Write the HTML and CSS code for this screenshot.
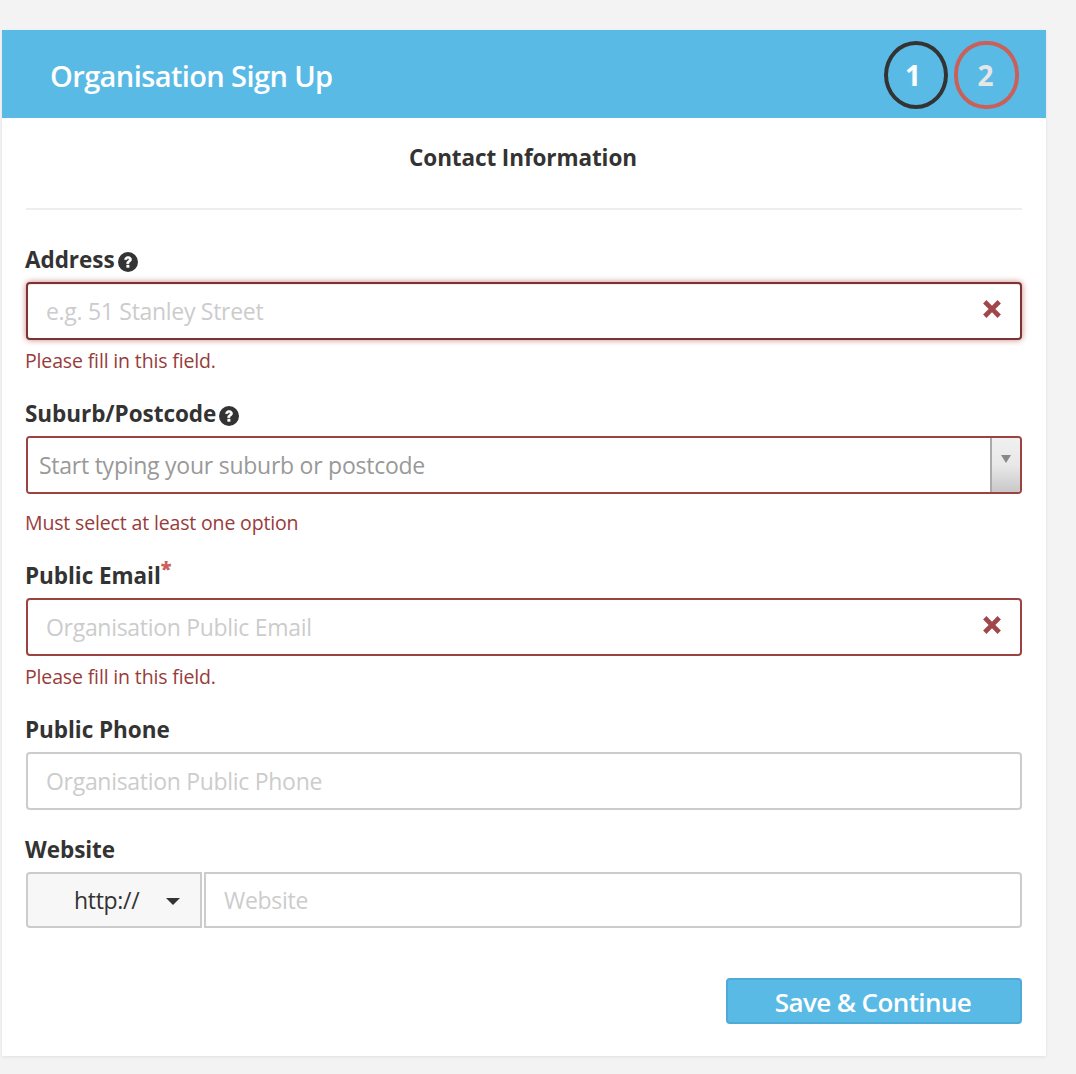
FILE: index.html
```html
<!DOCTYPE html>
<html lang="en">
<head>
    <meta charset="UTF-8">
    <meta name="viewport" content="width=device-width, initial-scale=1.0">
    <title>Organisation Sign Up</title>
    <link rel="stylesheet" href="styles.css">
</head>
<body>

<div class="card">
    <header class="card-header">
        <h1>Organisation Sign Up</h1>
        <div class="steps">
            <span class="step step-done">1</span>
            <span class="step step-current">2</span>
        </div>
    </header>

    <form class="signup-form">
        <h2>Contact Information</h2>
        <hr>

        <div class="form-group group-address">
            <label for="address">Address<svg class="help" viewBox="0 0 20 20"><circle cx="10" cy="10" r="10" fill="#333"/><path d="M6.6 7.6C6.8 5.6 8.2 4.6 10.1 4.6c2 0 3.4 1.1 3.4 2.9 0 1.4-.8 2-1.7 2.6-.7.5-.9.8-.9 1.6H8.7c0-1.5.4-2.2 1.4-2.9.7-.5 1.1-.8 1.1-1.3 0-.6-.5-1-1.1-1-.7 0-1.2.4-1.3 1.1z" fill="#fff" stroke="#fff" stroke-width=".7"/><rect x="8.4" y="12.9" width="3" height="2.8" fill="#fff"/></svg></label>
            <div class="input-wrap">
                <input type="text" id="address" class="input input-error input-focus" placeholder="e.g. 51 Stanley Street">
                <svg class="error-x" viewBox="0 0 18 18"><path d="M4 1l5 5 5-5 3 3-5 5 5 5-3 3-5-5-5 5-3-3 5-5-5-5z" fill="#a0474a"/></svg>
            </div>
            <p class="error-text">Please fill in this field.</p>
        </div>

        <div class="form-group group-suburb">
            <label for="suburb">Suburb/Postcode<svg class="help" viewBox="0 0 20 20"><circle cx="10" cy="10" r="10" fill="#333"/><path d="M6.6 7.6C6.8 5.6 8.2 4.6 10.1 4.6c2 0 3.4 1.1 3.4 2.9 0 1.4-.8 2-1.7 2.6-.7.5-.9.8-.9 1.6H8.7c0-1.5.4-2.2 1.4-2.9.7-.5 1.1-.8 1.1-1.3 0-.6-.5-1-1.1-1-.7 0-1.2.4-1.3 1.1z" fill="#fff" stroke="#fff" stroke-width=".7"/><rect x="8.4" y="12.9" width="3" height="2.8" fill="#fff"/></svg></label>
            <div class="combo">
                <input type="text" id="suburb" class="combo-input" placeholder="Start typing your suburb or postcode">
                <span class="combo-arrow"></span>
            </div>
            <p class="error-text error-below-combo">Must select at least one option</p>
        </div>

        <div class="form-group group-email">
            <label for="email">Public Email<span class="required">*</span></label>
            <div class="input-wrap">
                <input type="text" id="email" class="input input-error" placeholder="Organisation Public Email">
                <svg class="error-x" viewBox="0 0 18 18"><path d="M4 1l5 5 5-5 3 3-5 5 5 5-3 3-5-5-5 5-3-3 5-5-5-5z" fill="#a0474a"/></svg>
            </div>
            <p class="error-text">Please fill in this field.</p>
        </div>

        <div class="form-group group-phone">
            <label for="phone">Public Phone</label>
            <input type="text" id="phone" class="input" placeholder="Organisation Public Phone">
        </div>

        <div class="form-group group-website">
            <label for="website">Website</label>
            <div class="website-row">
                <button type="button" class="protocol">http:// <span class="caret"></span></button>
                <input type="text" id="website" class="input website-input" placeholder="Website">
            </div>
        </div>

        <div class="form-actions">
            <button type="submit" class="save">Save &amp; Continue</button>
        </div>
    </form>
</div>

</body>
</html>
```

FILE: styles.css
```css
* {
    box-sizing: border-box;
}
body {
    font-family: "Open Sans", Arial, sans-serif;
    margin: 0;
    padding: 30px 30px 18px 2px;
    background-color: #f3f3f3;
    color: #333;
}
.card {
    background-color: #fff;
    height: 1026px;
    box-shadow: 0 1px 3px rgba(0, 0, 0, 0.08);
}
.card-header {
    background-color: #5abae6;
    height: 88px;
    padding: 0 27px 0 48px;
    display: flex;
    align-items: center;
    justify-content: space-between;
}
.card-header h1 {
    margin: 0;
    color: #fff;
    font-size: 29px;
    font-weight: 600;
    letter-spacing: -0.6px;
    position: relative;
    top: 1px;
}
.steps {
    display: flex;
    gap: 6px;
    margin-top: 2px;
}
.step {
    width: 64px;
    height: 68px;
    border: 4px solid #333;
    border-radius: 50%;
    display: flex;
    align-items: center;
    justify-content: center;
    font-size: 28px;
    font-weight: 700;
    color: #fff;
}
.step-done {
    padding-right: 6px;
}
.step-current {
    width: 65px;
    padding-right: 2px;
    border-color: #c9605a;
    color: #e6e6e6;
    border-radius: 48%;
}
.signup-form {
    padding: 0 24px;
}
.signup-form h2 {
    margin: 0;
    padding: 26px 2px 0 0;
    height: 90px;
    font-size: 22.5px;
    line-height: 28px;
    font-weight: 700;
    text-align: center;
    letter-spacing: -0.1px;
}
hr {
    border: none;
    border-top: 2px solid #eee;
    margin: 0;
}
.form-group label {
    display: block;
    font-size: 22.5px;
    font-weight: 700;
    line-height: 28px;
    letter-spacing: -0.05px;
    margin-left: -1px;
    margin-bottom: 8px;
}
.help {
    width: 20px;
    height: 20px;
    margin-left: 3px;
    vertical-align: -4px;
}
.required {
    color: #c9605a;
    font-size: 20px;
    font-weight: 800;
    position: relative;
    top: -8px;
    line-height: 0;
}
.group-address {
    margin-top: 36px;
}
.group-suburb {
    margin-top: 25px;
}
.group-email {
    margin-top: 25px;
}
.group-phone {
    margin-top: 25px;
}
.group-website {
    margin-top: 26px;
}
.input-wrap {
    position: relative;
}
.input {
    display: block;
    width: 100%;
    height: 58px;
    border: 2px solid #ccc;
    border-radius: 4px;
    padding: 0 18px;
    font-family: inherit;
    font-size: 23px;
    letter-spacing: -0.3px;
    color: #333;
    background-color: #fff;
    outline: none;
}
.input::placeholder {
    color: #ccc;
    opacity: 1;
}
.input-error {
    border-color: #9c4341;
}
.input-focus {
    border-color: #7d3331;
    box-shadow: inset 0 1px 1px rgba(0, 0, 0, 0.075), 0 0 6px #ce8483;
}
.error-x {
    position: absolute;
    right: 20px;
    top: 17px;
    width: 20px;
    height: 20px;
}
.error-text {
    margin: 7px 0 0 -1px;
    font-size: 19.5px;
    line-height: 28px;
    color: #973c3a;
    letter-spacing: -0.15px;
}
.error-below-combo {
    margin-top: 15px;
}
.combo {
    display: flex;
    height: 58px;
    border: 2px solid #9c4341;
    border-radius: 4px;
    overflow: hidden;
}
.combo-input {
    flex: 1;
    border: none;
    outline: none;
    padding: 0 11px;
    font-family: inherit;
    font-size: 23px;
    letter-spacing: -0.25px;
}
.combo-input::placeholder {
    color: #999;
    opacity: 1;
}
.combo-arrow {
    width: 30px;
    border-left: 2px solid #aaa;
    background: linear-gradient(#f0f0f0, #e8e8e8 50%, #c8c8c8);
    position: relative;
}
.combo-arrow::after {
    content: "";
    position: absolute;
    left: 9px;
    top: 17px;
    border-left: 5px solid transparent;
    border-right: 5px solid transparent;
    border-top: 8px solid #888;
}
.website-row {
    display: flex;
    gap: 2px;
}
.protocol {
    width: 176px;
    height: 56px;
    flex-shrink: 0;
    border: 2px solid #ccc;
    border-radius: 4px 0 0 4px;
    background-color: #f7f7f7;
    font-family: inherit;
    font-size: 23px;
    color: #333;
    padding: 0 0 0 26px;
    letter-spacing: -0.3px;
}
.caret {
    display: inline-block;
    margin-left: 21px;
    vertical-align: 4px;
    border-left: 7px solid transparent;
    border-right: 7px solid transparent;
    border-top: 7px solid #333;
}
.website-input {
    height: 56px;
    border-radius: 0 4px 4px 0;
}
.form-actions {
    margin-top: 50px;
    display: flex;
    justify-content: flex-end;
}
.save {
    width: 296px;
    height: 46px;
    background-color: #5abae6;
    border: 2px solid #4eaad6;
    border-radius: 4px;
    color: #fff;
    font-family: inherit;
    font-size: 26px;
    font-weight: 600;
    letter-spacing: -0.6px;
    padding: 2px 2px 0 0;
}
```
